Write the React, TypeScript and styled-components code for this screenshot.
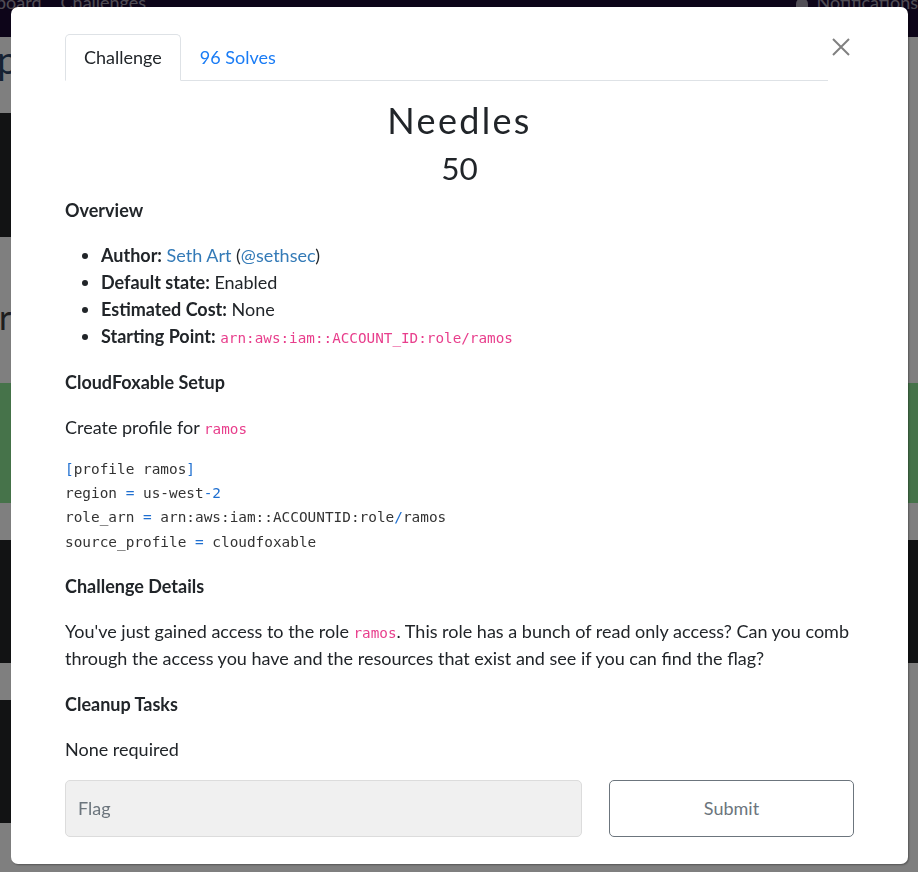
import React from 'react'
import styled, { createGlobalStyle } from 'styled-components'

const GlobalStyle = createGlobalStyle`
  html, body {
    margin: 0;
    padding: 0;
    height: 100%;
    overflow: hidden;
    background: #ffffff;
    font-family: Lato, "Open Sans", sans-serif;
    color: #212529;
  }
  * { box-sizing: border-box; }
`

// ---- page behind the modal ----

const Page = styled.div`
  display: flex;
  flex-direction: column;
  width: 918px;
  height: 872px;
  overflow: hidden;
`

const Navbar = styled.nav`
  display: flex;
  align-items: flex-start;
  gap: 19px;
  height: 37px;
  flex-shrink: 0;
  background: #1a0a32;
  overflow: hidden;
`

const NavLink = styled.span<{ $shift?: number }>`
  margin-top: -8px;
  margin-left: ${p => p.$shift ?? 0}px;
  font-size: 18px;
  line-height: 20px;
  color: rgba(255, 255, 255, 0.6);
  white-space: nowrap;
`

const NavSpacer = styled.div`
  flex: 1;
`

const Bell = styled.span`
  width: 12px;
  height: 12px;
  margin-top: -2px;
  margin-right: -10px;
  border-radius: 6px 6px 2px 2px;
  background: rgba(255, 255, 255, 0.6);
`

const Hero = styled.div`
  height: 76px;
  flex-shrink: 0;
  overflow: hidden;
`

const HeroTitle = styled.div`
  margin: 0 0 0 -3px;
  font-size: 38px;
  line-height: 44px;
  color: #2d4466;
`

const CardRow = styled.div<{ $height: number }>`
  display: flex;
  gap: 24px;
  height: ${p => p.$height}px;
  flex-shrink: 0;
`

const DarkCard = styled.div<{ $width: number | string }>`
  width: ${p => (typeof p.$width === 'number' ? `${p.$width}px` : p.$width)};
  height: 100%;
  background: #242628;
`

const Category = styled.div`
  display: flex;
  align-items: flex-end;
  height: 146px;
  padding-bottom: 46px;
  flex-shrink: 0;
  overflow: hidden;
`

const CategoryTitle = styled.span`
  margin-left: -1px;
  font-size: 34px;
  line-height: 40px;
  color: #3c3c3c;
`

const Banner = styled.div`
  height: 120px;
  flex-shrink: 0;
  background: #8ce694;
`

const Gap = styled.div<{ $height: number }>`
  height: ${p => p.$height}px;
  flex-shrink: 0;
`

// ---- modal ----

const Overlay = styled.div`
  position: fixed;
  inset: 0;
  padding: 7px 0 0 11px;
  background: rgba(0, 0, 0, 0.5);
`

const Modal = styled.div`
  display: flex;
  flex-direction: column;
  width: 897px;
  height: 857px;
  padding: 27px 54px;
  background: #ffffff;
  border-radius: 7px;
  box-shadow: 1px 1px 2px rgba(0, 0, 0, 0.35);
`

const Header = styled.div`
  display: flex;
  align-items: flex-start;
`

const Tabs = styled.div`
  display: flex;
  flex: 1;
  border-bottom: 1px solid #dee2e6;
`

const Tab = styled.div<{ $active?: boolean }>`
  padding: 9px 18px;
  margin-bottom: -1px;
  font-size: 18px;
  line-height: 27px;
  color: ${p => (p.$active ? '#212529' : '#1a7cf5')};
  background: ${p => (p.$active ? '#ffffff' : 'transparent')};
  border: 1px solid ${p => (p.$active ? '#dee2e6' : 'transparent')};
  border-bottom-color: ${p => (p.$active ? '#ffffff' : 'transparent')};
  border-radius: 5px 5px 0 0;
`

const CloseButton = styled.button`
  display: flex;
  align-items: center;
  justify-content: center;
  width: 26px;
  height: 26px;
  padding: 0;
  border: none;
  background: none;
  cursor: pointer;
`

const ChallengeName = styled.h2`
  margin: 18px 0 7px;
  text-align: center;
  font-size: 36px;
  font-weight: 400;
  line-height: 43px;
  letter-spacing: 2.3px;
  color: #212529;
`

const ChallengeValue = styled.h3`
  margin: 0 0 11px;
  text-align: center;
  font-size: 31.5px;
  font-weight: 400;
  line-height: 38px;
  color: #212529;
`

const Description = styled.div`
  font-size: 18px;
  line-height: 27px;
  color: #212529;
`

const SectionTitle = styled.div`
  margin: 0 0 20px;
  font-size: 18px;
  font-weight: 700;
  line-height: 24px;
`

const List = styled.ul`
  margin: 0 0 20px;
  padding-left: 36px;
`

const Label = styled.strong`
  font-weight: 700;
`

const Link = styled.a`
  color: #337ab7;
  text-decoration: none;
`

const Paragraph = styled.p`
  margin: 0 0 20px;
`

const InlineCode = styled.code`
  font-family: "DejaVu Sans Mono", "Liberation Mono", monospace;
  font-size: 14.3px;
  line-height: 1;
  color: #e83e8c;
`

const CodeBlock = styled.pre`
  margin: -4px 0 20px;
  font-family: "DejaVu Sans Mono", "Liberation Mono", monospace;
  font-size: 14.4px;
  line-height: 24.2px;
  color: #333333;
  white-space: pre;
`

const Token = styled.span`
  color: #1f6fd0;
`

const FlagRow = styled.div`
  display: flex;
  gap: 27px;
  margin-top: -3px;
`

const FlagInput = styled.input`
  flex: 1;
  height: 57px;
  padding: 0 12px;
  font-family: Lato, sans-serif;
  font-size: 18px;
  color: #495057;
  background: #f0f0f0;
  border: 1px solid #dcdcdc;
  border-radius: 5px;
  outline: none;

  &::placeholder {
    color: #6c757d;
  }
`

const SubmitButton = styled.button`
  width: 245px;
  height: 57px;
  font-family: Lato, sans-serif;
  font-size: 18px;
  color: #6c757d;
  background: #ffffff;
  border: 1px solid #6c757d;
  border-radius: 5px;
  cursor: pointer;
`

export default function App() {
  return (
    <>
      <GlobalStyle />
      <Page>
        <Navbar>
          <NavLink $shift={-48}>Scoreboard</NavLink>
          <NavLink>Challenges</NavLink>
          <NavSpacer />
          <Bell />
          <NavLink>Notifications</NavLink>
        </Navbar>
        <Hero>
          <HeroTitle>p</HeroTitle>
        </Hero>
        <CardRow $height={124}>
          <DarkCard $width={280} />
        </CardRow>
        <Category>
          <CategoryTitle>ri</CategoryTitle>
        </Category>
        <Banner />
        <Gap $height={37} />
        <CardRow $height={123}>
          <DarkCard $width="100%" />
        </CardRow>
        <Gap $height={37} />
        <CardRow $height={123}>
          <DarkCard $width={280} />
        </CardRow>
      </Page>

      <Overlay>
        <Modal>
          <Header>
            <Tabs>
              <Tab $active>Challenge</Tab>
              <Tab>96 Solves</Tab>
            </Tabs>
            <CloseButton aria-label="Close">
              <svg width="18" height="18" viewBox="0 0 18 18">
                <path d="M1 1 L17 17 M17 1 L1 17" stroke="#808080" strokeWidth="2" fill="none" />
              </svg>
            </CloseButton>
          </Header>

          <ChallengeName>Needles</ChallengeName>
          <ChallengeValue>50</ChallengeValue>

          <Description>
            <SectionTitle>Overview</SectionTitle>
            <List>
              <li>
                <Label>Author:</Label> <Link>Seth Art</Link> (<Link>@sethsec</Link>)
              </li>
              <li>
                <Label>Default state:</Label> Enabled
              </li>
              <li>
                <Label>Estimated Cost:</Label> None
              </li>
              <li>
                <Label>Starting Point:</Label> <InlineCode>arn:aws:iam::ACCOUNT_ID:role/ramos</InlineCode>
              </li>
            </List>

            <SectionTitle>CloudFoxable Setup</SectionTitle>
            <Paragraph>
              Create profile for <InlineCode>ramos</InlineCode>
            </Paragraph>
            <CodeBlock>
              <Token>[</Token>profile ramos<Token>]</Token>
              {'\n'}region <Token>=</Token> us-west<Token>-2</Token>
              {'\n'}role_arn <Token>=</Token> arn:aws:iam::ACCOUNTID:role<Token>/</Token>ramos
              {'\n'}source_profile <Token>=</Token> cloudfoxable
            </CodeBlock>

            <SectionTitle>Challenge Details</SectionTitle>
            <Paragraph>
              You've just gained access to the role <InlineCode>ramos</InlineCode>. This role has a bunch of read
              only access? Can you comb through the access you have and the resources that exist and see if you can
              find the flag?
            </Paragraph>

            <SectionTitle>Cleanup Tasks</SectionTitle>
            <Paragraph>None required</Paragraph>
          </Description>

          <FlagRow>
            <FlagInput placeholder="Flag" />
            <SubmitButton>Submit</SubmitButton>
          </FlagRow>
        </Modal>
      </Overlay>
    </>
  )
}
